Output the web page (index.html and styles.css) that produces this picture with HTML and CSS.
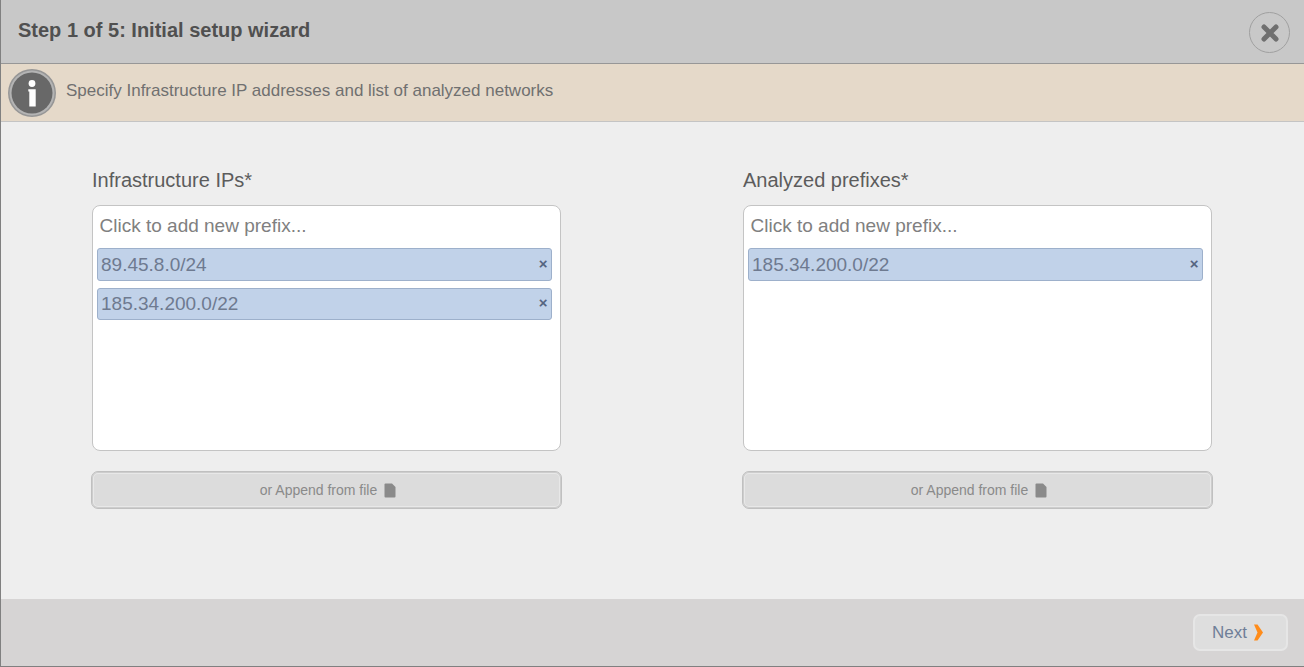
FILE: index.html
```html
<!DOCTYPE html>
<html lang="en">
<head>
    <meta charset="UTF-8">
    <meta name="viewport" content="width=device-width, initial-scale=1.0">
    <title>Initial setup wizard</title>
    <link rel="stylesheet" href="styles.css">
</head>
<body>
    <div class="wizard">
        <div class="wizard-header">
            <h1>Step 1 of 5: Initial setup wizard</h1>
            <button class="close-btn" aria-label="Close">
                <svg width="20" height="20" viewBox="0 0 20 20"><path d="M4 4L16 16M16 4L4 16" stroke="#6f6f6f" stroke-width="5" stroke-linecap="round"/></svg>
            </button>
        </div>
        <div class="wizard-info">
            <div class="info-icon">
                <svg width="48" height="48" viewBox="0 0 48 48">
                    <circle cx="24" cy="24" r="24" fill="#969696"/>
                    <circle cx="24" cy="24" r="22.5" fill="#b4b4b4"/>
                    <circle cx="24" cy="24" r="20.5" fill="#686868"/>
                    <circle cx="24" cy="14.5" r="3.4" fill="#fff"/>
                    <path d="M20.3 20.2H27.7V37.5H21.3V22.4H20.3Z" fill="#fff"/>
                </svg>
            </div>
            <p>Specify Infrastructure IP addresses and list of analyzed networks</p>
        </div>
        <div class="wizard-body">
            <div class="field">
                <label>Infrastructure IPs*</label>
                <div class="prefix-box">
                    <div class="prefix-input">Click to add new prefix...</div>
                    <div class="prefix-item"><span>89.45.8.0/24</span><span class="remove">×</span></div>
                    <div class="prefix-item"><span>185.34.200.0/22</span><span class="remove">×</span></div>
                </div>
                <button class="append-btn">or Append from file
                    <svg width="12" height="15" viewBox="0 0 12 15"><path d="M0.5 1.5Q0.5 0.5 1.5 0.5H8L11.5 4V13.5Q11.5 14.5 10.5 14.5H1.5Q0.5 14.5 0.5 13.5Z" fill="#8a8a8a"/></svg>
                </button>
            </div>
            <div class="field">
                <label>Analyzed prefixes*</label>
                <div class="prefix-box">
                    <div class="prefix-input">Click to add new prefix...</div>
                    <div class="prefix-item"><span>185.34.200.0/22</span><span class="remove">×</span></div>
                </div>
                <button class="append-btn">or Append from file
                    <svg width="12" height="15" viewBox="0 0 12 15"><path d="M0.5 1.5Q0.5 0.5 1.5 0.5H8L11.5 4V13.5Q11.5 14.5 10.5 14.5H1.5Q0.5 14.5 0.5 13.5Z" fill="#8a8a8a"/></svg>
                </button>
            </div>
        </div>
        <div class="wizard-footer">
            <button class="next-btn">Next
                <svg width="10" height="17" viewBox="0 0 10 17"><path d="M1 0.5H4.5L10 8.5L4.5 16.5H1L4.5 8.5Z" fill="#ff8c1a"/></svg>
            </button>
        </div>
    </div>
</body>
</html>
```

FILE: styles.css
```css
html, body {
    height: 100%;
}
body {
    font-family: "Liberation Sans", Arial, sans-serif;
    margin: 0;
    padding: 0;
    background-color: #888;
}
.wizard {
    height: 667px;
    box-sizing: border-box;
    display: flex;
    flex-direction: column;
    border-left: 1px solid #808080;
    border-bottom: 1px solid #808080;
    background-color: #eee;
}
.wizard-header {
    height: 63px;
    flex: none;
    display: flex;
    align-items: center;
    justify-content: space-between;
    padding: 0 14px 0 17px;
    background-color: #c8c8c8;
    border-bottom: 1px solid #979797;
}
.wizard-header h1 {
    margin: 0 0 2px;
    font-size: 20px;
    font-weight: bold;
    color: #505050;
}
.close-btn {
    width: 41px;
    height: 41px;
    margin-top: 2px;
    padding: 0;
    display: flex;
    align-items: center;
    justify-content: center;
    background: transparent;
    border: 1px solid #a0a0a0;
    border-radius: 50%;
}
.wizard-info {
    height: 57px;
    flex: none;
    display: flex;
    align-items: center;
    gap: 10px;
    padding-left: 7px;
    background-color: #e5d9c9;
    border-bottom: 1px solid #c4c4c4;
}
.info-icon {
    height: 48px;
    margin-top: 1px;
}
.wizard-info p {
    margin: 0 0 4px;
    font-size: 17px;
    color: #707070;
}
.wizard-body {
    flex: 1;
    display: flex;
    justify-content: space-between;
    padding: 45px 91px 0 90px;
}
.field {
    width: 471px;
    display: flex;
    flex-direction: column;
    align-items: center;
}
.field label {
    align-self: stretch;
    padding-left: 1px;
    height: 38px;
    line-height: 26px;
    font-size: 20px;
    color: #5c5c5c;
}
.prefix-box {
    width: 469px;
    height: 246px;
    box-sizing: border-box;
    padding: 0 8px 0 4px;
    background-color: #fff;
    border: 1px solid #c4c4c4;
    border-radius: 8px;
}
.prefix-input {
    height: 38px;
    padding-left: 2.5px;
    line-height: 39px;
    font-size: 19px;
    color: #808080;
}
.prefix-item {
    height: 32.5px;
    box-sizing: border-box;
    margin: 4px 0 7px;
    padding: 1px 3.5px 0 3px;
    display: flex;
    align-items: center;
    justify-content: space-between;
    font-size: 19px;
    color: #6e7a90;
    background-color: #c1d2e9;
    border: 1px solid #9db0cb;
    border-radius: 3px;
}
.prefix-item + .prefix-item {
    margin-top: 0;
}
.remove {
    margin-bottom: 3px;
    font-size: 15px;
    font-weight: bold;
    color: #566480;
}
.append-btn {
    width: 471px;
    height: 38px;
    margin-top: 20px;
    padding: 0 0 0 3px;
    display: flex;
    align-items: center;
    justify-content: center;
    gap: 7px;
    font-family: inherit;
    font-size: 14px;
    color: #8a8a8a;
    background-color: #dcdcdc;
    border: 1px solid #c0c0c0;
    border-radius: 7px;
    box-shadow: inset 0 0 0 1px #cdcdcd, inset 0 0 0 2px #e8e8e8;
}
.wizard-footer {
    height: 67px;
    flex: none;
    box-sizing: border-box;
    display: flex;
    justify-content: flex-end;
    padding: 15px 16px 0 0;
    background-color: #d6d4d4;
}
.next-btn {
    width: 95px;
    height: 37px;
    padding: 0 6px 0 0;
    display: flex;
    align-items: center;
    justify-content: center;
    gap: 6px;
    font-family: inherit;
    font-size: 17px;
    color: #6f7f98;
    background-color: #dedede;
    border: 2px solid #e6e6e6;
    border-radius: 7px;
}
```
